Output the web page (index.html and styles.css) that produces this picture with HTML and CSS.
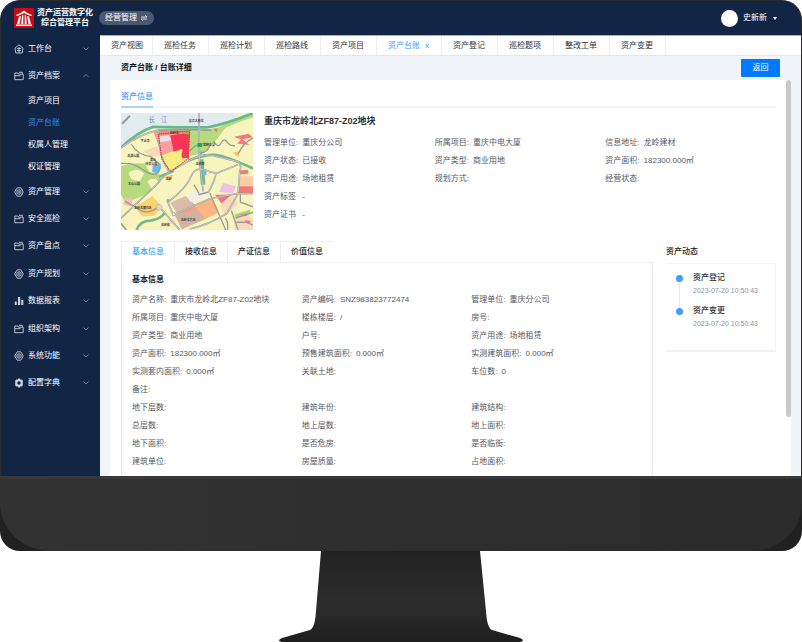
FILE: index.html
```html
<!DOCTYPE html>
<html lang="zh-CN">
<head>
<meta charset="utf-8">
<title>资产运营数字化综合管理平台</title>
<link rel="stylesheet" href="styles.css">
</head>
<body>
<svg class="defs" aria-hidden="true">
  <symbol id="i-down" viewBox="0 0 8 8"><path d="M1.5 2.5 4 5l2.500-2.500" fill="none" stroke="currentColor" stroke-width=".8"/></symbol>
  <symbol id="i-up" viewBox="0 0 8 8"><path d="M1.500 5 4 2.500 6.500 5" fill="none" stroke="currentColor" stroke-width=".8"/></symbol>
  <symbol id="i-gear" viewBox="0 0 10 10"><g fill="none" stroke="currentColor" stroke-width=".9"><path d="M3.200.8h3.600L9.300 5 6.800 9.200H3.200L.7 5z" stroke-linejoin="round"/><circle cx="5" cy="5" r="2.200"/><circle cx="5" cy="5" r=".5"/></g></symbol>
  <symbol id="i-home" viewBox="0 0 10 10"><g fill="none" stroke="currentColor" stroke-width=".9"><path d="M1 4.200 5 .8l4 3.400L8.200 9H1.800z" stroke-linejoin="round"/><path d="M3 4.500h4M3 6.500h4M5 3v6"/></g></symbol>
  <symbol id="i-folder" viewBox="0 0 10 10"><path d="M.8 8.700V2h3l.8 1.200h4.600v5.500zM1 4.700h5.500M5 1.300h3.300v1.500" fill="none" stroke="currentColor" stroke-width=".9" stroke-linejoin="round"/></symbol>
  <symbol id="i-bars" viewBox="0 0 10 10"><path d="M.8 5.500h2V9h-2zM4 1h2.200v8H4zM7.300 4h2v5h-2z" fill="currentColor"/></symbol>
  <symbol id="i-cog" viewBox="0 0 10 10"><path fill-rule="evenodd" fill="currentColor" d="M4 .5h2l.4 1.300 1.300-.4L9.100 3l-.7 1.200.9.8-.9.900.7 1.200-1.400 1.500-1.300-.4L6 9.500H4l-.4-1.300-1.300.4L.9 7.100l.7-1.200L.7 5l.9-.8L.9 3l1.400-1.600 1.300.4zM5 3.300a1.700 1.700 0 1 0 0 3.400 1.700 1.700 0 0 0 0-3.400z"/></symbol>
</svg>

<div class="screen">
  <header class="topbar">
    <div class="brand">
      <svg class="logo" viewBox="0 0 20 20" aria-hidden="true">
        <rect width="20" height="20" rx="1" fill="#c90a14"/>
        <path d="M2 7Q7 5.500 10 2.500 13 5.500 18 7L17 8Q13 7 10 5 7 7 3 8zM5 8.500l2-.6L5.500 16H3zM8 7.500l1.300-.7V16H7.200zM10.700 6.800l1.300.7.8 8.500h-2.100zM13 7.900l2 .6L17 16h-2.500zM2 16.500h16V18H2z" fill="#fff"/>
      </svg>
      <h1 class="brand-name">资产运营数字化<br>综合管理平台</h1>
    </div>
    <button class="mode" type="button">经营管理
      <svg viewBox="0 0 8 8" aria-hidden="true"><path d="M1 3h6L5 1M7 5H1l2 2" fill="none" stroke="currentColor" stroke-width=".8"/></svg>
    </button>
    <button class="user" type="button"><span class="avatar"></span>史新新<span class="caret"></span></button>
  </header>

  <div class="body">
    <nav class="side">
      <a class="item" href="#"><svg class="ico"><use href="#i-home"/></svg>工作台<svg class="arrow"><use href="#i-down"/></svg></a>
      <a class="item" href="#"><svg class="ico"><use href="#i-folder"/></svg>资产档案<svg class="arrow"><use href="#i-up"/></svg></a>
      <a class="sub" href="#">资产项目</a>
      <a class="sub current" href="#">资产台账</a>
      <a class="sub" href="#">权属人管理</a>
      <a class="sub" href="#">权证管理</a>
      <a class="item" href="#"><svg class="ico"><use href="#i-gear"/></svg>资产管理<svg class="arrow"><use href="#i-down"/></svg></a>
      <a class="item" href="#"><svg class="ico"><use href="#i-folder"/></svg>安全巡检<svg class="arrow"><use href="#i-down"/></svg></a>
      <a class="item" href="#"><svg class="ico"><use href="#i-folder"/></svg>资产盘点<svg class="arrow"><use href="#i-down"/></svg></a>
      <a class="item" href="#"><svg class="ico"><use href="#i-gear"/></svg>资产规划<svg class="arrow"><use href="#i-down"/></svg></a>
      <a class="item" href="#"><svg class="ico"><use href="#i-bars"/></svg>数据报表<svg class="arrow"><use href="#i-down"/></svg></a>
      <a class="item" href="#"><svg class="ico"><use href="#i-folder"/></svg>组织架构<svg class="arrow"><use href="#i-down"/></svg></a>
      <a class="item" href="#"><svg class="ico"><use href="#i-gear"/></svg>系统功能<svg class="arrow"><use href="#i-down"/></svg></a>
      <a class="item" href="#"><svg class="ico"><use href="#i-cog"/></svg>配置字典<svg class="arrow"><use href="#i-down"/></svg></a>
    </nav>

    <main class="main">
      <div class="pages">
        <a href="#">资产视图</a><a href="#">巡检任务</a><a href="#">巡检计划</a><a href="#">巡检路线</a><a href="#">资产项目</a><a class="current" href="#">资产台账<span>x</span></a><a href="#">资产登记</a><a href="#">巡检题项</a><a href="#">整改工单</a><a href="#">资产变更</a>
      </div>
      <div class="crumbs">
        <h2>资产台账 / 台账详细</h2>
        <button class="back" type="button">返回</button>
      </div>
      <div class="scroll">
        <div class="card">
          <div class="section"><span>资产信息</span></div>
          <div class="summary">
            <svg class="map" viewBox="33 87 397 348" preserveAspectRatio="none" role="img" aria-label="地块位置图">
              <rect x="33" y="87" width="397" height="348" fill="#f7f5bd"/>
              <path d="M33 87H430V92Q350 130 290 134L130 132Q80 150 33 190z" fill="#e2ecef"/>
              <path d="M33 245Q70 232 105 238L118 262 150 270 152 290 118 325 70 345 45 350 33 330z" fill="#b5db7c"/>
              <path d="M55 265q25-20 48 2l-14 24-25-8zM112 290q25-16 34 4l-20 20z" fill="#f7f5bd"/>
              <path d="M238 136Q330 140 358 112L410 100 350 128 310 178 285 205 240 215z" fill="#b5db7c"/>
              <path d="M385 90l45-3v48l-50 20-42 10z" fill="#f7f5bd"/>
              <path d="M430 96Q375 112 345 128" fill="none" stroke="#b5db7c" stroke-width="9"/>
              <path d="M33 190Q80 145 130 128L200 130H290Q350 120 430 87" fill="none" stroke="#65b98a" stroke-width="8"/>
              <path d="M145 150L240 140 236 222 183 262 156 225z" fill="#f4ee7f"/>
              <path d="M180 154L240 142 236 222 215 218 218 194 190 202z" fill="#f93558"/>
              <path d="M215 206l12-8v-8l9 4v24l-18 4z" fill="#f93558"/>
              <path d="M147 153l33-3 11 50-35 12z" fill="#fb9d9e"/>
              <path d="M149 156l28-4 7 17-33 5z" fill="#e7e1e6"/>
              <path d="M146 140l88-2-2 11-85 5z" fill="#f58b7a"/>
              <path d="M213 148l25-8v12z" fill="#7ac142"/>
              <path d="M100 200l45-15 10 27-28 5z" fill="#fbd9bb"/>
              <path d="M130 142l15-2 10 65-9-20z" fill="#f9a08c"/>
              <path d="M310 135l15-3-5 12zM372 158l45-9 12 10-30 6 20 17-37-4 13-12zM388 258l28-2v12l-26 2zM384 305h46v20h-46z" fill="#f7787a"/>
              <path d="M392 275h38v28h-46z" fill="#f9cda9"/>
              <path d="M370 205l17-5v20zM165 278l24-8-10 24z" fill="#fbc66d"/>
              <path d="M340 295l38 10-8 20-42-3z" fill="#efc1e3"/>
              <path d="M45 338l25 4-8 24-22-7z" fill="#fbb9c0"/>
              <path d="M75 368l52-34 28 30-20 28-38 3z" fill="#fbd171"/>
              <path d="M181 354l46-20 30 27-15 14-38 14z" fill="#d8bdad"/>
              <path d="M230 332l46-19 26 15-60 24z" fill="#eeeeec"/>
              <path d="M195 391l70-28 23 39-72 31z" fill="#d2b4a5"/>
              <path d="M215 380l37-18 12 9-44 17z" fill="#fb9d82"/>
              <path d="M257 365l48-28 20 48-39 17z" fill="#fdb680"/>
              <path d="M316 330h50l-31 26z" fill="#fb7185"/>
              <path d="M330 362l41-29 14 25-39 35zM372 394l38-10 20 20v31h-55z" fill="#fbd9bb"/>
              <path d="M374 389l48-15-5 17-40 8z" fill="#a9d574"/>
              <path d="M390 390l22-5v9zM404 405l20 3-7 10z" fill="#f7787a"/>
              <path d="M170 404l20-4 9 20-19-5z" fill="#fbd9bb"/>
              <g fill="none" stroke="#6fbb89" stroke-width="8" stroke-linejoin="round">
                <path d="M236 228Q290 208 320 212T430 252M147 277l45-18M80 435q10-28 42-28 30-4 44-24"/>
                <path d="M274 225l6 75" stroke-width="14"/>
              </g>
              <path d="M128 243l24-6 2 15-15 15-12-5zM171 343l10 1-2 8h-9zM266 200h10v13h-10zM279 255h11v17h-11z" fill="#6fb9ea"/>
              <g fill="none" stroke="#9b9a9b" stroke-width="5" stroke-linejoin="round">
                <path d="M33 237Q60 236 70 240T110 262 150 254M64 180Q85 214 122 216L150 240M300 325l48 110M385 210q15-35 45-48M312 172q14 22 22 4 10-18 20 0 8 10 22 8M145 366Q110 396 76 366L45 350M347 400q10 14 6 35M392 322v30l38 14M378 400l52-18M380 412h30l20 8M252 300l16 26M365 378l20 57M240 200q25-30 62-20-10 26-30 26" stroke-width="4"/>
                <path id="roads" d="M268 87V215L280 320M33 400L65 370 140 300Q165 268 200 250T250 222Q290 205 320 216L385 232Q398 240 390 262L386 320M33 190Q90 150 145 138l90-2 70 2M145 140q0 75 32 121M190 390l-16-37Q230 310 244 275T300 262l20 4 65-25M190 390l110-48 86-16M430 327h-45L352 385Q300 418 240 432M319 266Q310 300 296 322L266 330M210 435L150 368M33 415l16 20"/>
              </g>
              <path d="M268 87V215L280 320M33 400L65 370 140 300Q165 268 200 250T250 222Q290 205 320 216L385 232Q398 240 390 262L386 320M33 190Q90 150 145 138M145 140q0 75 32 121M190 390l-16-37Q230 310 244 275T300 262l20 4 65-25M190 390l110-48 86-16M430 327h-45L352 385Q300 418 240 432M319 266Q310 300 296 322M210 435L150 368" fill="none" stroke="#dddcd8" stroke-width="2"/>
              <circle cx="148" cy="368" r="9" fill="#d7d7d3" stroke="#999"/>
              <circle cx="192" cy="388" r="5" fill="#fff" stroke="#888" stroke-width="2"/>
              <path d="M145 150L240 140 236 222 183 262 156 225z" fill="none" stroke="#dd3046" stroke-width="3" stroke-dasharray="5 2"/>
              <path d="M263 176h14v12h-14z" fill="#27a166"/>
              <path d="M36 119l24-24" stroke="#999" stroke-width="6"/>
              <g class="map-label"><text x="92" y="172">下沙湾</text><text x="52" y="219">龙湖公园</text><text x="120" y="230">黄山</text><text x="106" y="241">体育公园</text><text x="54" y="301">北山公园</text><text x="72" y="373">龙岭北居住区</text><text x="180" y="148">龙岭北</text><text x="168" y="286">龙岭</text><text x="237" y="114">滨江大桥北</text><text x="280" y="185">龙岭立交</text><text x="257" y="241">龙岭路</text><text x="213" y="407">龙岭北片区</text><text x="153" y="424">龙岭南</text></g>
              <g class="map-river"><text x="116" y="113">长</text><text x="153" y="113">江</text></g>
            </svg>
            <div class="facts">
              <h3>重庆市龙岭北ZF87-Z02地块</h3>
              <dl class="grid">
                <div><dt>管理单位:</dt><dd>重庆分公司</dd></div>
                <div><dt>所属项目:</dt><dd>重庆中电大厦</dd></div>
                <div><dt>信息地址:</dt><dd>龙岭建材</dd></div>
                <div><dt>资产状态:</dt><dd>已接收</dd></div>
                <div><dt>资产类型:</dt><dd>商业用地</dd></div>
                <div><dt>资产面积:</dt><dd>182300.000㎡</dd></div>
                <div><dt>资产用途:</dt><dd>场地租赁</dd></div>
                <div><dt>规划方式:</dt><dd></dd></div>
                <div><dt>经营状态:</dt><dd></dd></div>
                <div class="row"><dt>资产标签</dt><dd>&nbsp;-</dd></div>
                <div class="row"><dt>资产证书</dt><dd>&nbsp;-</dd></div>
              </dl>
            </div>
          </div>

          <div class="detail">
            <section class="panel">
              <div class="tabs">
                <button class="current" type="button">基本信息</button><button type="button">接收信息</button><button type="button">产证信息</button><button type="button">价值信息</button>
              </div>
              <div class="panel-body">
                <h4>基本信息</h4>
                <dl class="grid">
                  <div><dt>资产名称:</dt><dd>重庆市龙岭北ZF87-Z02地块</dd></div>
                  <div><dt>资产编码:</dt><dd>SNZ983823772474</dd></div>
                  <div><dt>管理单位:</dt><dd>重庆分公司</dd></div>
                  <div><dt>所属项目:</dt><dd>重庆中电大厦</dd></div>
                  <div><dt>楼栋楼层:</dt><dd>/</dd></div>
                  <div><dt>房号:</dt><dd></dd></div>
                  <div><dt>资产类型:</dt><dd>商业用地</dd></div>
                  <div><dt>户号:</dt><dd></dd></div>
                  <div><dt>资产用途:</dt><dd>场地租赁</dd></div>
                  <div><dt>资产面积:</dt><dd>182300.000㎡</dd></div>
                  <div><dt>预售建筑面积:</dt><dd>0.000㎡</dd></div>
                  <div><dt>实测建筑面积:</dt><dd>0.000㎡</dd></div>
                  <div><dt>实测套内面积:</dt><dd>0.000㎡</dd></div>
                  <div><dt>关联土地:</dt><dd></dd></div>
                  <div><dt>车位数:</dt><dd>0</dd></div>
                  <div class="row"><dt>备注:</dt><dd></dd></div>
                  <div><dt>地下层数:</dt><dd></dd></div>
                  <div><dt>建筑年份:</dt><dd></dd></div>
                  <div><dt>建筑结构:</dt><dd></dd></div>
                  <div><dt>总层数:</dt><dd></dd></div>
                  <div><dt>地上层数:</dt><dd></dd></div>
                  <div><dt>地上面积:</dt><dd></dd></div>
                  <div><dt>地下面积:</dt><dd></dd></div>
                  <div><dt>是否危房:</dt><dd></dd></div>
                  <div><dt>是否临街:</dt><dd></dd></div>
                  <div><dt>建筑单位:</dt><dd></dd></div>
                  <div><dt>房屋质量:</dt><dd></dd></div>
                  <div><dt>占地面积:</dt><dd></dd></div>
                </dl>
              </div>
            </section>
            <aside class="news">
              <h4>资产动态</h4>
              <ol class="timeline">
                <li><b>资产登记</b><time>2023-07-20 10:50:43</time></li>
                <li><b>资产变更</b><time>2023-07-20 10:50:43</time></li>
              </ol>
            </aside>
          </div>
        </div>
        <div class="track"><div class="thumb"></div></div>
      </div>
    </main>
  </div>
</div>
<div class="chin"><div class="chin-face"></div></div>
<svg class="stand" viewBox="0 0 244 91" aria-hidden="true">
  <defs>
    <linearGradient id="metal" x1="0" y1="0" x2="0" y2="1"><stop offset="0" stop-color="#222"/><stop offset=".6" stop-color="#2d2d2d"/><stop offset="1" stop-color="#1e1e1e"/></linearGradient>
  </defs>
  <path d="M42 0H201L207 60Q208 77 213 79L241 87Q244 88 244 90L241 91H3L0 90Q0 88 3 87L31 79Q36 77 37 60z" fill="url(#metal)"/>
</svg>
</body>
</html>
```
FILE: styles.css
```css
* { box-sizing: border-box; }

body {
  margin: 0;
  height: 100vh;
  display: flex;
  flex-direction: column;
  background: #fff;
  color: #303133;
  font: 8px/18px "Liberation Sans", "Noto Sans CJK SC", sans-serif;
}

a { color: inherit; text-decoration: none; }
button { font: inherit; color: inherit; border: 0; padding: 0; background: none; }
h1, h2, h3, h4, dl, dd, ol { margin: 0; padding: 0; }
.defs { display: none; }

.screen {
  flex: 1;
  min-height: 0;
  display: flex;
  flex-direction: column;
  border: 1px solid #2b2b2b;
  border-bottom: 0;
  border-radius: 20px 20px 0 0;
  background: #132545;
  overflow: hidden;
}

.topbar {
  flex: none;
  height: 34px;
  display: flex;
  align-items: center;
  padding: 0 24px 0 13px;
  color: #fff;
}
.brand { display: flex; align-items: center; gap: 3px; }
.logo { width: 20px; height: 20px; }
.brand-name { font-size: 8px; line-height: 10px; font-weight: 700; text-align: center; }
.mode {
  display: flex;
  align-items: center;
  gap: 3px;
  height: 14px;
  margin-left: 6px;
  padding: 0 6px;
  border-radius: 7px;
  background: #4a5872;
}
.mode svg { width: 8px; height: 8px; }
.user { display: flex; align-items: center; margin-left: auto; }
.avatar { width: 17px; height: 17px; margin-right: 5px; border-radius: 50%; background: #fff; }
.caret { margin-left: 6px; border: 2px solid transparent; border-top: 3px solid #fff; border-bottom: 0; }

.body { flex: 1; min-height: 0; display: flex; }

.side {
  flex: none;
  width: 99px;
  display: flex;
  flex-direction: column;
  padding-bottom: 79px;
  color: #fff;
}
.item { flex: 1; display: flex; align-items: center; padding: 0 10px 0 13px; }
.ico { width: 10px; height: 10px; margin-right: 4px; color: #cdd3de; }
.arrow { width: 8px; height: 8px; margin-left: auto; color: #8792a6; }
.sub { height: 22px; padding-left: 27px; line-height: 22px; }
.sub.current { color: #2d8cf0; }

.main {
  flex: 1;
  min-width: 0;
  display: flex;
  flex-direction: column;
  border-top: 1px solid #a8b0be;
  background: #f1f4f9;
}
.pages {
  flex: none;
  display: flex;
  height: 20px;
  line-height: 20px;
  background: #fff;
  border-bottom: 1px solid #e3e6ec;
}
.pages a { padding: 0 12px 0 11px; border-right: 1px solid #eceef2; white-space: nowrap; }
.pages a:first-child { padding-right: 9px; }
.pages .current { color: #409eff; }
.pages span { margin-left: 5px; }

.crumbs {
  flex: none;
  height: 24px;
  display: flex;
  align-items: center;
  justify-content: space-between;
  padding: 0 21px;
}
.crumbs h2 { font-size: 8px; color: #111; }
.back { width: 39px; height: 18px; border-radius: 1px; background: #007bff; color: #fff; }

.scroll { flex: 1; min-height: 0; display: flex; padding: 0 10px; }
.card { flex: 1; min-width: 0; padding: 8px 10px 0 11px; background: #fff; overflow: hidden; }
.track { flex: none; width: 5px; background: #fff; }
.thumb { height: 85%; border-radius: 3px; background: #c9c9c9; }

.section { border-bottom: 2px solid #f3f4f6; color: #409eff; font-weight: 500; }
.section span { display: inline-block; margin-bottom: -2px; border-bottom: 2px solid #a9d3ff; }

.summary { display: flex; gap: 11px; margin-top: 5px; }
.map { flex: none; width: 132px; height: 117px; }
.map-label { font-size: 9px; font-weight: 700; fill: #333; }
.map-river { font-size: 19px; fill: #7482c4; }
.facts { flex: 1; min-width: 0; }
.facts h3 { margin-bottom: 5px; font-size: 9px; line-height: 16px; }

.grid { display: grid; grid-template-columns: repeat(3, 1fr); color: #55585e; }
.grid div { display: flex; gap: 4px; height: 18px; white-space: nowrap; }
.grid .row { grid-column: 1 / -1; }

.detail { display: flex; gap: 13px; margin-top: 11px; }
.panel { flex: 1; min-width: 0; }
.tabs { display: flex; height: 22px; }
.tabs button {
  padding: 0 10px;
  border-top: 1px solid #eceef2;
  border-right: 1px solid #eceef2;
  border-bottom: 1px solid #eceef2;
  color: #222;
  font-weight: 500;
}
.tabs .current { border-left: 1px solid #eceef2; border-bottom-color: transparent; color: #409eff; }
.tabs button:last-child { border-right: 0; }
.tabs::after { content: ""; flex: 1; border-bottom: 1px solid #eceef2; }
.panel-body { padding: 8px 11px 24px 10px; border: 1px solid #e4e7ed; border-width: 0 1px; }
h4 { font-size: 8px; color: #222; }
.panel-body h4 { margin-bottom: 2px; }

.news { flex: none; width: 110px; }
.news h4 { height: 22px; line-height: 22px; font-weight: 500; }
.timeline {
  height: 89px;
  padding: 7px 0 0 10px;
  border: 1px solid #f3f4f6;
  border-left: 0;
  border-bottom: 2px solid #f0f1f3;
  list-style: none;
}
.timeline li { position: relative; height: 33px; padding-left: 17px; line-height: 14px; }
.timeline li::before {
  content: "";
  position: absolute;
  left: 0;
  top: 4px;
  width: 7px;
  height: 7px;
  border-radius: 50%;
  background: #409eff;
}
.timeline li:first-child::after {
  content: "";
  position: absolute;
  left: 3px;
  top: 11px;
  width: 1px;
  height: 26px;
  background: #e4e7ed;
}
.timeline b, .timeline time { display: block; white-space: nowrap; }
.timeline b { font-weight: 500; }
.timeline time { font-size: 7px; line-height: 12px; color: #909399; }

.chin { flex: none; height: 75px; border-radius: 0 0 20px 20px; background: #212121; overflow: hidden; }
.chin-face {
  height: 100%;
  border-top: 3px solid #383838;
  border-radius: 0 0 51px 51px / 0 0 48px 48px;
  background: linear-gradient(90deg, #323232, #2b2b2b);
}
.stand { flex: none; align-self: center; width: 244px; height: 91px; }
```
